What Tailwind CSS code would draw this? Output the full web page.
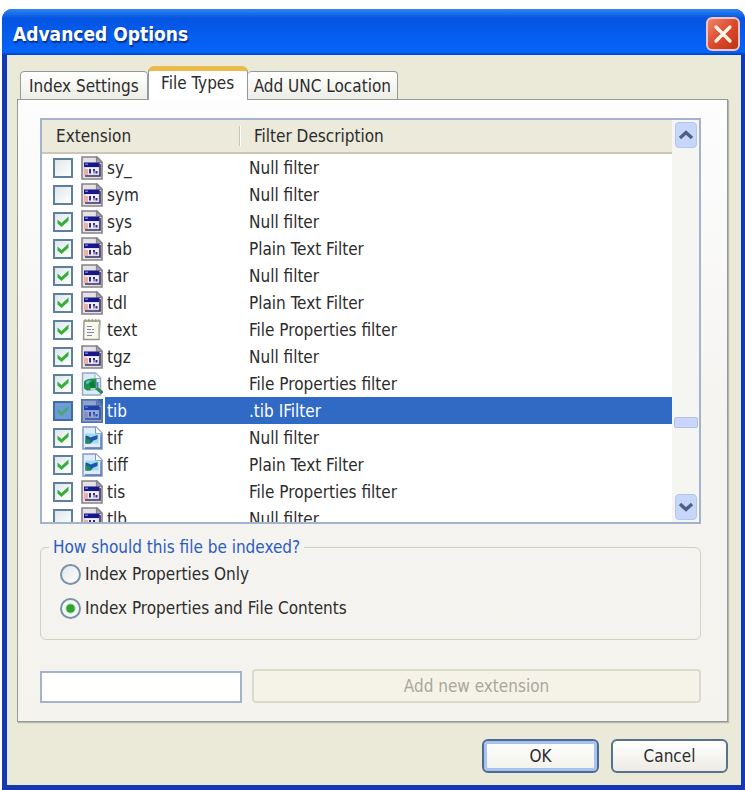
<!DOCTYPE html>
<html lang="en">
<head>
  <meta charset="UTF-8">
  <meta name="viewport" content="width=device-width, initial-scale=1.0">
  <title>Advanced Options</title>
  <script src="https://cdn.jsdelivr.net/npm/@tailwindcss/browser@4"></script>
</head>
<body class="flex min-h-screen flex-col bg-white pt-[9px] pl-[2px] font-['DejaVu_Sans_Condensed','DejaVu_Sans',sans-serif] text-[17px] leading-5 text-[#2c2c2c]">

  <!-- Icons -->
  <svg class="hidden">
    <symbol id="icon-app" viewBox="0 0 22 24">
      <path d="M1 1h15l5 5v17H1z" fill="#e6e2e4" stroke="#86828a" stroke-width="1.6"/>
      <path d="M15.500 1v5.500H21z" fill="#a9a5ae" stroke="#86828a" stroke-width="1.2"/>
      <path d="M3 6.500h15v13H3z" fill="#cfc8e4"/>
      <path d="M3 6.500h15.500v4.500H3z" fill="#17178a"/>
      <path d="M4 7.500h3v1.500H4z" fill="#6f78d8"/>
      <path d="M4.500 11.500h13v7h-13z" fill="#f4effa"/>
      <path d="M3 13h4v6H3z" fill="#eab0a4"/>
      <path d="M8 13h2v4.500H8zM12 13h2v2h-2zM14.500 15h2v2.500h-2z" fill="#2b2b92"/>
      <path d="M12 15h2v2.500h-2z" fill="#9a84c6"/>
      <path d="M19 8v12H4" fill="none" stroke="#3a3560" stroke-width="1.600"/>
    </symbol>
    <symbol id="icon-text" viewBox="0 0 22 24">
      <path d="M3 3h16l-1 18.500H2.500z" fill="#f7f6ef" stroke="#96958c" stroke-width="1.4"/>
      <path d="M3.500 2.500h15" stroke="#a39a72" stroke-width="2.600" stroke-dasharray="2 1.400"/>
      <path d="M17.800 6v14.500" stroke="#c9c5b2" stroke-width="1.600"/>
      <path d="M6 8.500h5M6 11.500h4M6 14.500h7M6 17.500h5M11 11.500h2" stroke="#85859c" stroke-width="1.200"/>
    </symbol>
    <symbol id="icon-theme" viewBox="0 0 22 24">
      <path d="M1.500 1h13l5 5v17h-18z" fill="#dcebf7" stroke="#94a9c6" stroke-width="1.500"/>
      <path d="M14 1v5.500h5.500" fill="#fff" stroke="#94a9c6"/>
      <path d="M3 9.500c3-3 8-3.500 12.500-2.500v11l-8 .5c-3 0-5-2-4.500-4z" fill="#219150"/>
      <path d="M5 9.500c1.500-1 3-1.500 5-1l-3 3.500-2-.5z" fill="#5cb9c9"/>
      <path d="M8 11.500l5-2.500 1 6-4 2z" fill="#0f7a39"/>
      <path d="M9.500 17h5" stroke="#e6f1f3" stroke-width="1.500"/>
      <path d="M15.500 16l6 5" stroke="#2b8a4c" stroke-width="3.400"/>
      <path d="M16.500 10v5" stroke="#5b7bc0" stroke-width="2"/>
    </symbol>
    <symbol id="icon-image" viewBox="0 0 22 24">
      <path d="M2 1h13l6 6v16H2z" fill="#e1ecfa" stroke="#8299c4" stroke-width="1.500"/>
      <path d="M14.500 1v6.500H21" fill="#fafcff" stroke="#8299c4"/>
      <path d="M4.500 7.500h13v10h-13z" fill="#9edcf2"/>
      <path d="M4.500 9.500c2 0 3.500 1 5 2l7-2.500v4l-4 1.500-3 3h-5z" fill="#1c57a0"/>
      <path d="M4.500 12.500l4 1 1.500 2-1.500 2h-4z" fill="#1f8a55"/>
      <path d="M20 8.500V22H4" fill="none" stroke="#5273b0" stroke-width="1.300"/>
    </symbol>
    <symbol id="icon-check" viewBox="0 0 20 20">
      <path d="M4.500 7.500l4 3.500L15.500 4.500v4.300L8.500 15l-4-3.600z" fill="#35ae3b"/>
    </symbol>
  </svg>

  <div class="flex flex-1 flex-col overflow-hidden rounded-t-[10px] bg-[#1438b0]">
    <!-- Title bar -->
    <div class="flex h-[46px] items-center justify-between bg-linear-to-b from-[#2f86f0] via-[#0554e2] via-20% to-[#0566fb] pr-[5px] pl-[11px] shadow-[inset_0_-2px_1px_#0a46c0]">
      <h1 class="pt-1 text-[19px] font-bold text-white [text-shadow:1px_2px_1px_#0a2f8c]">Advanced Options</h1>
      <button aria-label="Close" class="mt-1 grid size-[34px] place-items-center rounded-md border-2 border-[#efc5c8] bg-linear-to-br from-[#ee8468] via-[#dc4a2c] to-[#bf3410]">
        <svg class="size-5" viewBox="0 0 20 20"><path d="M3 3l14 14M17 3L3 17" stroke="#fff6ea" stroke-width="3.200" stroke-linecap="round"/></svg>
      </button>
    </div>

    <!-- Dialog body -->
    <div class="mr-1 mb-[5px] ml-[5px] flex flex-1 flex-col border-x border-t border-[#d8ebfa] bg-[#ebe9d8] pt-[10px] pr-3 pb-3 pl-[9px]">
      <!-- Tabs -->
      <div role="tablist" class="relative -mb-px flex items-end pl-[3px]">
        <button role="tab" class="h-[29px] rounded-t-sm border border-[#919b9c] bg-linear-to-b from-white to-[#ededE6] px-2">Index Settings</button>
        <button role="tab" aria-selected="true" class="h-[34px] w-[100px] rounded-t-md border-x border-t-[5px] border-x-[#919b9c] border-t-[#eaba4c] bg-white pb-[5px]">File Types</button>
        <button role="tab" class="h-[29px] rounded-t-sm border border-l-0 border-[#919b9c] bg-linear-to-b from-white to-[#ededE6] px-[6px]">Add UNC Location</button>
      </div>

      <!-- Tab panel -->
      <div role="tabpanel" class="flex flex-1 flex-col border border-[#919b9c] bg-linear-to-b from-[#fdfdfe] via-[#f5f4f1] to-[#f5f3ee] pt-[18px] pr-[26px] pb-[18px] pl-[22px] shadow-[1px_1px_1px_#b9b7a8]">
        <div class="flex h-[406px] border-2 border-[#a3b3cc] bg-white">
          <div class="min-w-0 flex-1 overflow-hidden">
            <table class="w-full table-fixed border-collapse text-left">
              <thead>
                <tr class="h-[33px] border-b-2 border-[#cbc7b8] bg-[#ebeadb]">
                  <th class="w-[197px] pl-[14px] font-normal">Extension</th>
                  <th class="p-0 font-normal"><div class="border-l border-[#c7c5b2] pl-[14px] shadow-[1px_0_0_#fff_inset]">Filter Description</div></th>
                </tr>
              </thead>
              <tbody id="rows"></tbody>
            </table>
          </div>
          <!-- Scrollbar -->
          <div class="flex w-[27px] flex-col items-center bg-[#f5f5f1] py-[2px]">
            <button aria-label="Scroll up" class="grid h-[26px] w-[22px] place-items-center rounded-sm border border-[#b5c5ee] bg-[#c7d6fb]">
              <svg class="h-3 w-4" viewBox="0 0 16 12"><path d="M2 9l6-5.500L14 9" fill="none" stroke="#4d6185" stroke-width="3.400"/></svg>
            </button>
            <div class="mt-[269px] h-[11px] w-[24px] rounded-xs border border-[#b3c1ea] bg-[#c9d5fb]"></div>
            <button aria-label="Scroll down" class="mt-auto grid h-[26px] w-[22px] place-items-center rounded-sm border border-[#b5c5ee] bg-[#c7d6fb]">
              <svg class="h-3 w-4" viewBox="0 0 16 12"><path d="M2 3l6 5.500L14 3" fill="none" stroke="#4d6185" stroke-width="3.400"/></svg>
            </button>
          </div>
        </div>

        <fieldset class="mt-[13px] h-[103px] rounded-md border border-[#d3d1bf] px-[19px]">
          <legend class="-ml-[11px] px-1 text-[#2a5cc4]">How should this file be indexed?</legend>
          <label class="flex h-[34px] items-center gap-1">
            <input type="radio" name="indexing" class="size-[21px] appearance-none rounded-full border-2 border-[#7c93a8] bg-linear-to-br from-[#e4e7ea] to-white checked:bg-radial checked:from-[#2fa32f] checked:from-30% checked:to-[#f4faf4] checked:to-45%">
            Index Properties Only
          </label>
          <label class="flex h-[34px] items-center gap-1">
            <input type="radio" name="indexing" checked class="size-[21px] appearance-none rounded-full border-2 border-[#7c93a8] bg-linear-to-br from-[#e4e7ea] to-white checked:bg-radial checked:from-[#2fa32f] checked:from-30% checked:to-[#f4faf4] checked:to-45%">
            Index Properties and File Contents
          </label>
        </fieldset>

        <div class="mt-auto flex items-end gap-[10px]">
          <input type="text" aria-label="New extension" class="h-[32px] w-[202px] border-2 border-[#a3b3cc] bg-white px-2">
          <button disabled class="h-[34px] flex-1 rounded-sm border-2 border-[#dcdacb] bg-[#f5f3e8] text-[#a9a799]">Add new extension</button>
        </div>
      </div>

      <!-- Dialog buttons -->
      <div class="mt-[17px] flex justify-end gap-3">
        <button class="h-[34px] w-[117px] rounded-md border-2 border-[#4b6a93] bg-linear-to-b from-white to-[#f1f0ea] shadow-[inset_0_0_0_3px_#a9c2f0]">OK</button>
        <button class="h-[34px] w-[117px] rounded-md border-2 border-[#58718c] bg-linear-to-b from-white to-[#ecebe4]">Cancel</button>
      </div>
    </div>
  </div>

  <script>
    // [extension, filter, icon, checked]
    const files = [
      ["sy_", "Null filter", "app", false],
      ["sym", "Null filter", "app", false],
      ["sys", "Null filter", "app", true],
      ["tab", "Plain Text Filter", "app", true],
      ["tar", "Null filter", "app", true],
      ["tdl", "Plain Text Filter", "app", true],
      ["text", "File Properties filter", "text", true],
      ["tgz", "Null filter", "app", true],
      ["theme", "File Properties filter", "theme", true],
      ["tib", ".tib IFilter", "app", true],
      ["tif", "Null filter", "image", true],
      ["tiff", "Plain Text Filter", "image", true],
      ["tis", "File Properties filter", "app", true],
      ["tlb", "Null filter", "app", false],
    ];
    const selected = "tib";

    document.getElementById("rows").innerHTML = files.map(([ext, filter, icon, checked]) => {
      const on = ext === selected;
      return `
        <tr class="h-[27px]">
          <td class="p-0">
            <div class="flex h-[27px] items-center pl-[11px]">
              <span class="grid size-5 shrink-0">
                <input type="checkbox" id="ext-${ext}" ${checked ? "checked" : ""}
                  class="col-start-1 row-start-1 size-5 appearance-none border-2 ${on ? "border-[#3f6ba8] bg-[#6c9bd8]" : "border-[#5f7f9f] bg-linear-to-br from-[#dfe7ea] to-white"}">
                ${checked ? `<svg class="pointer-events-none col-start-1 row-start-1 size-5 ${on ? "opacity-60" : ""}"><use href="#icon-check"/></svg>` : ""}
              </span>
              <span class="ml-2 h-6 w-[22px] shrink-0 ${on ? "bg-[#316ac5]" : ""}">
                <svg class="h-6 w-[22px] ${on ? "opacity-50" : ""}"><use href="#icon-${icon}"/></svg>
              </span>
              <label for="ext-${ext}" class="ml-[2px] flex h-[27px] flex-1 items-center pl-[2px] ${on ? "bg-[#316ac5] text-white" : ""}">${ext}</label>
            </div>
          </td>
          <td class="py-0 pl-[10px] ${on ? "bg-[#316ac5] text-white" : ""}">${filter}</td>
        </tr>`;
    }).join("");
  </script>
</body>
</html>
